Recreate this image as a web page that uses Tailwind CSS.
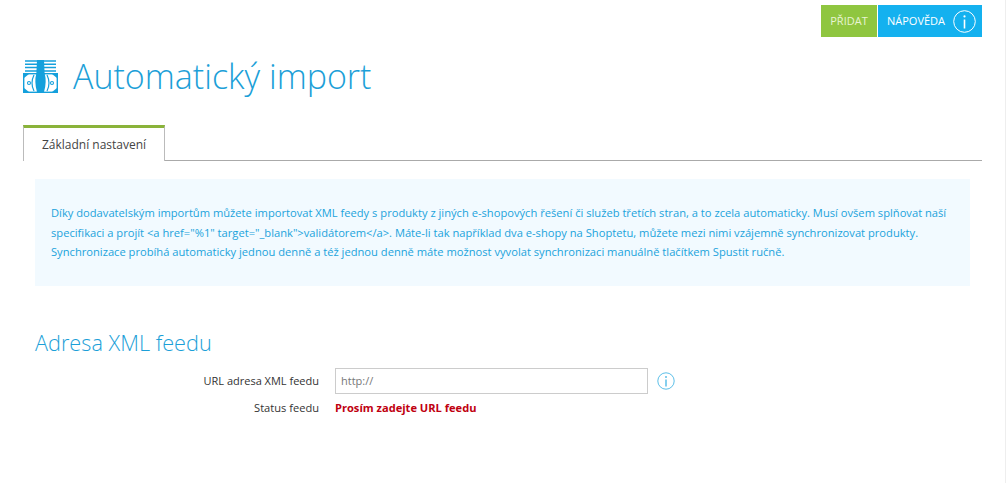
<!DOCTYPE html>
<html lang="cs">
<head>
    <meta charset="UTF-8">
    <script src="https://cdn.jsdelivr.net/npm/@tailwindcss/browser@4"></script>
    <title>Automatický import</title>
</head>
<body class="bg-white h-[483px] overflow-hidden border-r border-r-[#eee] font-['Open_Sans',sans-serif] text-[11px] text-[#333]">
    <div class="flex justify-end pt-[5px] pr-[23px] gap-px">
        <a class="h-[32px] w-[56px] flex items-center justify-center bg-[#8fc640] text-[#e8f4d4] text-[11px]">PŘIDAT</a>
        <a class="h-[32px] w-[104px] flex items-center pl-[9px] bg-[#14b1ef] text-white text-[11px]">
            NÁPOVĚDA
            <svg class="ml-[8px]" width="23" height="23" viewBox="0 0 23 23" fill="none" stroke="white">
                <circle cx="11.5" cy="11.5" r="10.8"/>
                <circle cx="11.5" cy="6.4" r="1.1" fill="white" stroke="none"/>
                <path d="M11.5 9.5v9" stroke-width="1.6"/>
            </svg>
        </a>
    </div>

    <div class="flex items-center pl-[23px] mt-[15px] h-[48px]">
        <svg width="35" height="33" viewBox="0 0 35 33" class="mr-[15px]" fill="none" stroke="#14a0dc">
            <path d="M2 1h31M2 4.3h31M2 7.6h31M2 10.9h31" stroke-width="1.5"/>
            <rect x=".7" y="13.7" width="33.6" height="18.6" stroke-width="1.4"/>
            <path d="M1 14h5l-5 4zM34 14h-5l5 4zM1 32h5l-5-4zM34 32h-5l5-4z" fill="#14a0dc" stroke="none"/>
            <path d="M14 0h7l.6 13q2.4 9-.6 19h-7q-3-10-.6-19z" fill="#14a0dc" stroke="none"/>
            <path d="M11 15q-4 8 0 16M24 15q4 8 0 16" stroke-width="1.2"/>
            <circle cx="6" cy="23" r="1.5" stroke-width="1.1"/>
            <circle cx="29" cy="23" r="1.5" stroke-width="1.1"/>
        </svg>
        <h1 class="text-[34px] leading-[48px] font-light text-[#1c9fd8]">Automatický import</h1>
    </div>

    <div class="mx-[23px] w-[959px] mt-[25px] h-[36px] border-b border-[#aaa] flex items-end">
        <div class="h-[36px] w-[142px] -mb-px bg-white border-t-[3px] border-t-[#8ab33a] border-x border-x-[#bbb] flex items-center justify-center text-[12px] text-[#444]">Základní nastavení</div>
    </div>

    <div class="mx-[35px] w-[935px] mt-[18px] h-[107px] bg-[#f2faff] pl-[16px] pr-[10px] pt-[24px] text-[#1ba3dc] text-[11.16px] leading-[19.5px] whitespace-nowrap">
        Díky dodavatelským importům můžete importovat XML feedy s produkty z jiných e-shopových řešení či služeb třetích stran, a to zcela automaticky. Musí ovšem splňovat naší<br>
        specifikaci a projít &lt;a href="%1" target="_blank"&gt;validátorem&lt;/a&gt;. Máte-li tak například dva e-shopy na Shoptetu, můžete mezi nimi vzájemně synchronizovat produkty.<br>
        Synchronizace probíhá automaticky jednou denně a též jednou denně máte možnost vyvolat synchronizaci manuálně tlačítkem Spustit ručně.
    </div>

    <h2 class="ml-[35px] mt-[42px] text-[21.7px] leading-[30px] font-light text-[#1c9fd8]">Adresa XML feedu</h2>

    <div class="flex items-center mt-[10px] h-[26px]">
        <label class="w-[319px] text-right text-[11px]">URL adresa XML feedu</label>
        <div class="ml-[16px] w-[313px] h-[26px] border border-[#ccc] flex items-center pl-[5px] text-[#777] text-[11px]">http://</div>
        <svg class="ml-[9px]" width="18" height="18" viewBox="0 0 18 18" fill="none" stroke="#5cbfe8">
            <circle cx="9" cy="9" r="8.2"/>
            <circle cx="9" cy="5" r="1" fill="#5cbfe8" stroke="none"/>
            <path d="M9 7.5v7" stroke-width="1.5"/>
        </svg>
    </div>
    <div class="flex items-center mt-[4px] h-[20px]">
        <span class="w-[319px] text-right text-[11.1px]">Status feedu</span>
        <span class="ml-[16px] text-[11.1px] font-bold text-[#c00010]">Prosím zadejte URL feedu</span>
    </div>
</body>
</html>
